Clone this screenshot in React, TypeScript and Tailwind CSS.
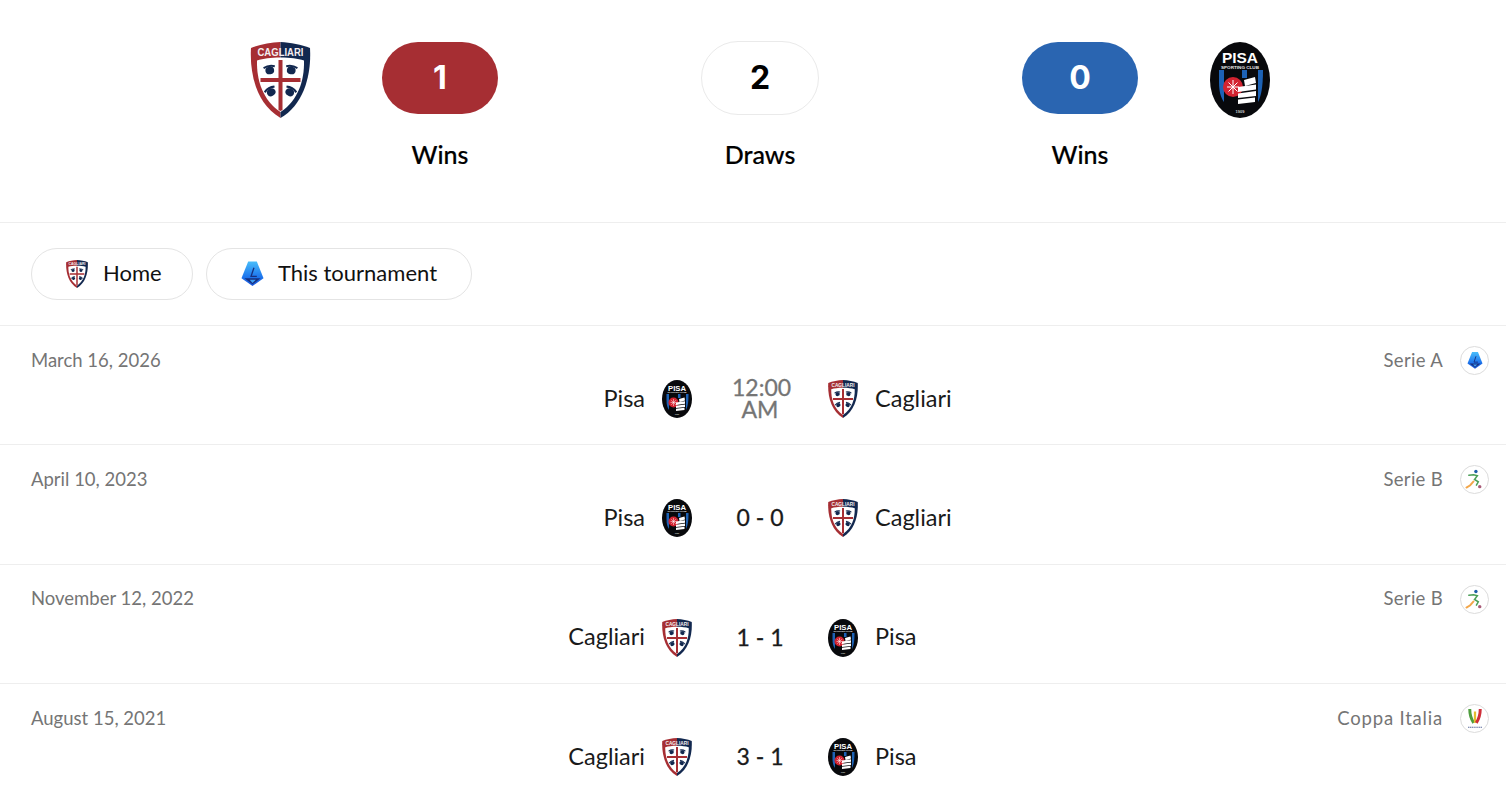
import React from "react";

const FONT = "font-['Lato','Noto_Sans',sans-serif]";

function Cagliari({ className }: { className: string }) {
  const moor = (x: number, y: number, rot: number) => (
    <g transform={`translate(${x} ${y}) rotate(${rot})`}>
      <ellipse cx="0" cy="1.500" rx="4.400" ry="3.800" fill="#12284f" />
      <path d="M-6 -2.800 Q0 -5.500 6 -2.800 L5.400 -.9 Q0 -3 -5.400 -.9 Z" fill="#12284f" />
    </g>
  );
  return (
    <svg viewBox="0 0 60 76" className={className}>
      <path d="M30 0 C20 .5 9 2.500 .5 6 C-1 32 6 62 30 76 Z" fill="#a62e33" />
      <path d="M30 0 C40 .5 51 2.500 59.500 6 C61 32 54 62 30 76 Z" fill="#12284f" />
      <path d="M30 15.500 C20 15.500 13 16.500 6.500 18.500 C6 38 12 58 30 70 C48 58 54 38 53.500 18.500 C47 16.500 40 15.500 30 15.500 Z" fill="#fff" />
      <path d="M28 18 H32 V36 H50 V40 H32 V68 L30 69 L28 68 V40 H10 V36 H28 Z" fill="#a62e33" />
      {moor(19, 27, -10)}
      {moor(41, 27, 10)}
      {moor(20, 49, -30)}
      {moor(40, 49, 30)}
      <text x="30" y="13.500" textAnchor="middle" fontSize="10" fontWeight="700" fill="#f4eef0" fontFamily="Liberation Sans, sans-serif" textLength="46" lengthAdjust="spacingAndGlyphs">CAGLIARI</text>
    </svg>
  );
}

function Pisa({ className }: { className: string }) {
  return (
    <svg viewBox="0 0 60 76" className={className}>
      <ellipse cx="30" cy="38" rx="30" ry="38" fill="#08090c" />
      <path d="M9 28 H14 V60 C11 56 9 50 9 40 Z" fill="#1d62b5" />
      <path d="M48 28 H53 C53 46 51 54 48 60 Z" fill="#1d62b5" />
      <rect x="32" y="28" width="5" height="8" fill="#1d62b5" />
      <text x="30" y="21" textAnchor="middle" fontSize="14" fontWeight="700" fill="#fff" fontFamily="Liberation Sans, sans-serif" textLength="36" lengthAdjust="spacingAndGlyphs">PISA</text>
      <text x="30" y="26.500" textAnchor="middle" fontSize="4" fontWeight="700" fill="#e8e8e8" fontFamily="Liberation Sans, sans-serif" textLength="38" lengthAdjust="spacingAndGlyphs">SPORTING CLUB</text>
      <circle cx="23" cy="45" r="10" fill="#d32330" />
      <path d="M23 38 V52 M17 45 H29 M18.500 40.500 L27.500 49.500 M27.500 40.500 L18.500 49.500" stroke="#fff" strokeWidth="1" />
      <path d="M34 38 L45 35 L46 41 L35 44 Z M28 45 L46 42.500 L46 47.500 L28 50 Z M28 51.500 L46 49 L46 54 L28 56 Z M28 57.500 L45 55.500 L45 60 L28 62 Z" fill="#fff" />
      <text x="30" y="70.500" textAnchor="middle" fontSize="4" fontWeight="700" fill="#cfcfcf" fontFamily="Liberation Sans, sans-serif">1909</text>
    </svg>
  );
}

function SerieA({ className }: { className: string }) {
  return (
    <svg viewBox="0 0 24 26" className={className}>
      <defs>
        <linearGradient id="lega" x1="0" y1="0" x2="0" y2="1">
          <stop offset="0" stopColor="#48bdfa" />
          <stop offset="0.600" stopColor="#1f78ee" />
          <stop offset="1" stopColor="#1a55d8" />
        </linearGradient>
      </defs>
      <path d="M7.500 0 H16.500 L23.500 17.500 L12 25.500 L.5 17.500 Z" fill="url(#lega)" />
      <path d="M13.500 6.500 L10.500 15.500 H16.500" fill="none" stroke="#17307f" strokeWidth="1.400" />
      <path d="M3.500 17.500 H20.500 L12 23.800 Z" fill="#17307f" />
      <path d="M9 19 H15.500 L12 22.500 Z" fill="#3fa0f5" />
    </svg>
  );
}

function SerieB({ className }: { className: string }) {
  return (
    <svg viewBox="0 0 20 22" className={className} fill="none" strokeLinecap="round">
      <circle cx="11.500" cy="2.500" r="1.800" fill="#1f5fa8" />
      <path d="M4 6.500 L9 6 L13 7 L10 11 L14 13.500 L12 17" stroke="#4c9f58" strokeWidth="1.600" />
      <path d="M9 13 L5.500 17 L1.500 19.500" stroke="#f2a64a" strokeWidth="2" />
      <circle cx="15.500" cy="18.500" r="1.800" fill="#a95a78" />
    </svg>
  );
}

function Coppa({ className }: { className: string }) {
  return (
    <svg viewBox="0 0 20 24" className={className} fill="none">
      <path d="M4 1 C4 8 6 13 8.500 17" stroke="#4e9e3e" strokeWidth="3.400" />
      <path d="M10 4 V17" stroke="#e4bd2e" strokeWidth="2.600" />
      <path d="M16 1 C16 8 14 13 11.500 17" stroke="#cf2f3a" strokeWidth="3.400" />
      <path d="M2 22 H18" stroke="#5a6a9a" strokeWidth="1.200" strokeDasharray="1.500 .6" />
    </svg>
  );
}

function Stat({ value, label, pill }: { value: string; label: string; pill: string }) {
  return (
    <div className="flex w-[116px] flex-col items-center">
      <div className={`flex h-[72px] w-[116px] items-center justify-center rounded-full font-['Inter',sans-serif] text-[32px] font-bold ${pill}`}>{value}</div>
      <div className="mt-[23px] text-[25px] leading-[34px] font-medium text-black [-webkit-text-stroke:0.2px_#000]">{label}</div>
    </div>
  );
}

type Team = "Pisa" | "Cagliari";

function Crest({ team }: { team: Team }) {
  return team === "Pisa" ? <Pisa className="h-[38px] w-[30px]" /> : <Cagliari className="h-[38px] w-[30px]" />;
}

function Row({ date, league, leagueClass, icon, home, away, center, muted }: { date: string; league: string; leagueClass: string; icon: React.ReactNode; home: Team; away: Team; center: string; muted?: boolean }) {
  return (
    <div className="h-[119.3px] border-t border-[#eeeeee] px-[31px] pt-[20px]">
      <div className="flex h-[29px] items-center justify-between text-[18.5px] text-[#757575]">
        <span>{date}</span>
        <span className="flex items-center gap-[17px]">
          <span className={leagueClass}>{league}</span>
          <span className="flex h-[29px] w-[29px] items-center justify-center rounded-full border border-[#dcdcdc] bg-white">{icon}</span>
        </span>
      </div>
      <div className="mt-[5px] flex h-[38px] items-center justify-center text-[23.5px] text-[#1a1a1a]">
        <div className="flex w-[331px] items-center justify-end gap-[17px]">
          <span className="pb-[1px]">{home}</span>
          <Crest team={home} />
        </div>
        <div className={`w-[136px] pb-[2px] text-center text-[23px] leading-[22px] [-webkit-text-stroke:0.3px_currentColor] ${muted ? "px-[40px] text-[#757575]" : "text-[#1a1a1a]"}`}>{center}</div>
        <div className="flex w-[331px] items-center gap-[17px]">
          <Crest team={away} />
          <span className="pb-[1px]">{away}</span>
        </div>
      </div>
    </div>
  );
}

export default function App() {
  return (
    <div className={`h-[790px] w-full overflow-hidden bg-white ${FONT}`}>
      <div className="w-[1520px]">
        <section className="flex h-[223px] justify-center border-b border-[#eeeeee] pt-[42px]">
          <Cagliari className="h-[76px] w-[61px]" />
          <div className="mr-[72px] ml-[71px] flex gap-[204px]">
            <Stat value="1" label="Wins" pill="bg-[#a62e33] text-white" />
            <Stat value="2" label="Draws" pill="bg-white text-black outline outline-1 outline-[#eaeaea]" />
            <Stat value="0" label="Wins" pill="bg-[#2a65b1] text-white" />
          </div>
          <Pisa className="h-[76px] w-[60px]" />
        </section>
        <section className="flex h-[102px] items-center gap-[13px] px-[31px]">
          <div className="flex h-[52px] w-[162px] items-center gap-[15px] rounded-full border border-[#e4e4e4] pl-[34px] text-[22px] text-[#111111]">
            <Cagliari className="h-[28px] w-[22px]" />
            <span className="pb-[4px]">Home</span>
          </div>
          <div className="flex h-[52px] w-[266px] items-center gap-[14px] rounded-full border border-[#e4e4e4] pl-[34px] text-[22px] text-[#111111]">
            <SerieA className="h-[26px] w-[23px]" />
            <span className="pb-[4px]">This tournament</span>
          </div>
        </section>
        <Row date="March 16, 2026" league="Serie A" leagueClass="tracking-[0.3px]" icon={<SerieA className="h-[17px] w-[16px]" />} home="Pisa" away="Cagliari" center="12:00 AM" muted />
        <Row date="April 10, 2023" league="Serie B" leagueClass="tracking-[0.3px]" icon={<SerieB className="h-[21px] w-[19px]" />} home="Pisa" away="Cagliari" center="0 - 0" />
        <Row date="November 12, 2022" league="Serie B" leagueClass="tracking-[0.3px]" icon={<SerieB className="h-[21px] w-[19px]" />} home="Cagliari" away="Pisa" center="1 - 1" />
        <Row date="August 15, 2021" league="Coppa Italia" leagueClass="tracking-[0.8px]" icon={<Coppa className="h-[21px] w-[18px]" />} home="Cagliari" away="Pisa" center="3 - 1" />
      </div>
    </div>
  );
}
